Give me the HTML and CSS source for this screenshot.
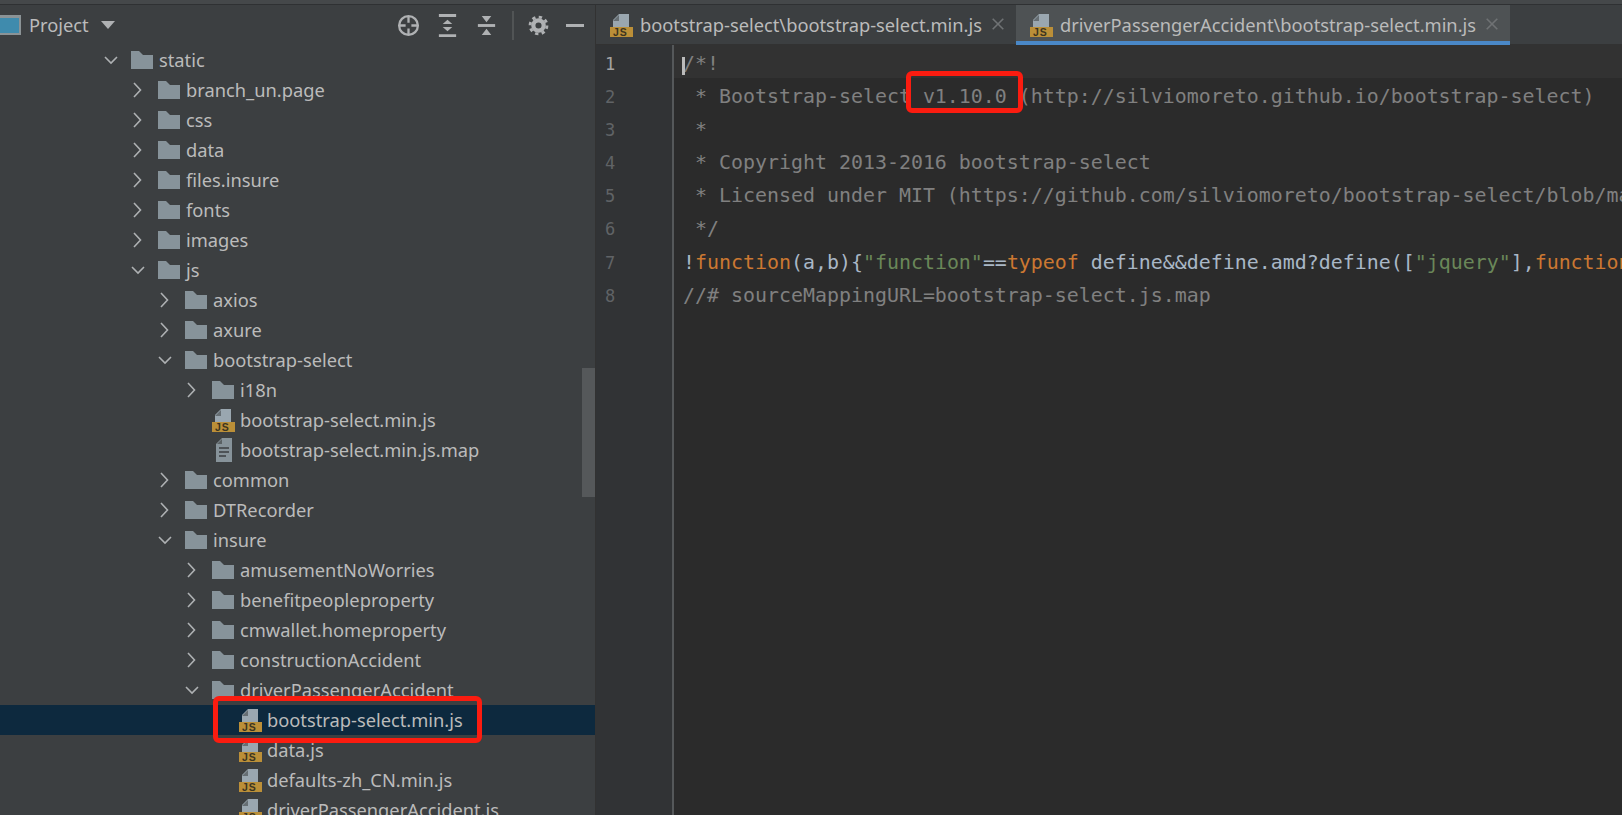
FILE: index.html
```html
<!DOCTYPE html>
<html lang="en">
<head>
  <meta charset="UTF-8" />
  <title>bootstrap-select.min.js</title>
  <link rel="stylesheet" href="styles.css">
</head>
<body>
  <svg class="defs" width="0" height="0">
    <symbol id="folder" viewBox="0 0 22 18">
      <path d="M0 0h8l4 4h10v14H0z" fill="#87939a"/>
    </symbol>
    <symbol id="open" viewBox="0 0 14 14">
      <path d="M1 4l6 6 6-6" fill="none" stroke="#aeb1b3" stroke-width="1.6"/>
    </symbol>
    <symbol id="closed" viewBox="0 0 14 16">
      <path d="M3 1l6.5 7L3 15" fill="none" stroke="#aeb1b3" stroke-width="1.6"/>
    </symbol>
    <symbol id="jsfile" viewBox="0 0 23 23">
      <path d="M9 0h10v13H3V6z" fill="#9aa7b0"/>
      <path d="M9 1v6H3z" fill="#3c3f41" opacity=".55"/>
      <rect x="0" y="13" width="23" height="10" fill="#bb8f38"/>
      <text x="3" y="21.8" class="js-label">JS</text>
    </symbol>
    <symbol id="mapfile" viewBox="0 0 16 24">
      <path d="M6 0h10v24H0V6z" fill="#87939a"/>
      <path d="M6 1v5H1z" fill="#3c3f41" opacity=".6"/>
      <path d="M3 10h10M3 14h10M3 18h7" stroke="#3c3f41" stroke-width="1.6"/>
    </symbol>
    <symbol id="close" viewBox="0 0 12 12">
      <path d="M.7.7l10.6 10.6M11.3.7L.7 11.3" stroke="#6f7274" stroke-width="1.6"/>
    </symbol>
  </svg>

  <div class="top-strip"></div>
  <div class="ide">
    <aside class="project">
      <div class="project-head">
        <span class="window-icon"></span>
        <span class="project-title">Project</span>
        <span class="drop-arrow"></span>
        <div class="tools">
          <svg class="tool" viewBox="0 0 24 24">
            <circle cx="12" cy="12" r="9.8" fill="none" stroke="#afb1b3" stroke-width="2.4"/>
            <path d="M12 3v6M12 15v6M3 12h6M15 12h6" stroke="#afb1b3" stroke-width="2.4"/>
          </svg>
          <svg class="tool" viewBox="0 0 24 24">
            <path d="M3 1.5h18M3 22.5h18" stroke="#afb1b3" stroke-width="3"/>
            <path d="M12 6l5 4.5H7zM12 18l-5-4.5h10z" fill="#afb1b3"/>
          </svg>
          <svg class="tool" viewBox="0 0 24 24">
            <path d="M3 12h18" stroke="#afb1b3" stroke-width="3"/>
            <path d="M7 2h10l-5 6.5zM7 22h10l-5-6.5z" fill="#afb1b3"/>
          </svg>
          <span class="tool-sep"></span>
          <svg class="tool" viewBox="0 0 24 24">
            <circle cx="12" cy="12" r="5.4" fill="none" stroke="#afb1b3" stroke-width="4.4"/>
            <circle cx="12" cy="12" r="8.8" fill="none" stroke="#afb1b3" stroke-width="3" stroke-dasharray="3.45 3.46"/>
          </svg>
          <span class="tool-minus"></span>
        </div>
      </div>

      <ul class="tree">
        <li class="row depth-0"><svg class="arrow"><use href="#open"/></svg><svg class="folder"><use href="#folder"/></svg>static</li>
        <li class="row depth-1"><svg class="arrow"><use href="#closed"/></svg><svg class="folder"><use href="#folder"/></svg>branch_un.page</li>
        <li class="row depth-1"><svg class="arrow"><use href="#closed"/></svg><svg class="folder"><use href="#folder"/></svg>css</li>
        <li class="row depth-1"><svg class="arrow"><use href="#closed"/></svg><svg class="folder"><use href="#folder"/></svg>data</li>
        <li class="row depth-1"><svg class="arrow"><use href="#closed"/></svg><svg class="folder"><use href="#folder"/></svg>files.insure</li>
        <li class="row depth-1"><svg class="arrow"><use href="#closed"/></svg><svg class="folder"><use href="#folder"/></svg>fonts</li>
        <li class="row depth-1"><svg class="arrow"><use href="#closed"/></svg><svg class="folder"><use href="#folder"/></svg>images</li>
        <li class="row depth-1"><svg class="arrow"><use href="#open"/></svg><svg class="folder"><use href="#folder"/></svg>js</li>
        <li class="row depth-2"><svg class="arrow"><use href="#closed"/></svg><svg class="folder"><use href="#folder"/></svg>axios</li>
        <li class="row depth-2"><svg class="arrow"><use href="#closed"/></svg><svg class="folder"><use href="#folder"/></svg>axure</li>
        <li class="row depth-2"><svg class="arrow"><use href="#open"/></svg><svg class="folder"><use href="#folder"/></svg>bootstrap-select</li>
        <li class="row depth-3"><svg class="arrow"><use href="#closed"/></svg><svg class="folder"><use href="#folder"/></svg>i18n</li>
        <li class="row depth-3 leaf"><svg class="file"><use href="#jsfile"/></svg>bootstrap-select.min.js</li>
        <li class="row depth-3 leaf"><svg class="file map"><use href="#mapfile"/></svg>bootstrap-select.min.js.map</li>
        <li class="row depth-2"><svg class="arrow"><use href="#closed"/></svg><svg class="folder"><use href="#folder"/></svg>common</li>
        <li class="row depth-2"><svg class="arrow"><use href="#closed"/></svg><svg class="folder"><use href="#folder"/></svg>DTRecorder</li>
        <li class="row depth-2"><svg class="arrow"><use href="#open"/></svg><svg class="folder"><use href="#folder"/></svg>insure</li>
        <li class="row depth-3"><svg class="arrow"><use href="#closed"/></svg><svg class="folder"><use href="#folder"/></svg>amusementNoWorries</li>
        <li class="row depth-3"><svg class="arrow"><use href="#closed"/></svg><svg class="folder"><use href="#folder"/></svg>benefitpeopleproperty</li>
        <li class="row depth-3"><svg class="arrow"><use href="#closed"/></svg><svg class="folder"><use href="#folder"/></svg>cmwallet.homeproperty</li>
        <li class="row depth-3"><svg class="arrow"><use href="#closed"/></svg><svg class="folder"><use href="#folder"/></svg>constructionAccident</li>
        <li class="row depth-3"><svg class="arrow"><use href="#open"/></svg><svg class="folder"><use href="#folder"/></svg>driverPassengerAccident</li>
        <li class="row depth-4 leaf selected"><svg class="file"><use href="#jsfile"/></svg>bootstrap-select.min.js</li>
        <li class="row depth-4 leaf"><svg class="file"><use href="#jsfile"/></svg>data.js</li>
        <li class="row depth-4 leaf"><svg class="file"><use href="#jsfile"/></svg>defaults-zh_CN.min.js</li>
        <li class="row depth-4 leaf"><svg class="file"><use href="#jsfile"/></svg>driverPassengerAccident.js</li>
      </ul>
      <div class="tree-scroll"></div>
    </aside>

    <main class="editor">
      <div class="tabs">
        <div class="tab">
          <svg class="file"><use href="#jsfile"/></svg>
          <span>bootstrap-select\bootstrap-select.min.js</span>
          <svg class="tab-close"><use href="#close"/></svg>
        </div>
        <div class="tab active">
          <svg class="file"><use href="#jsfile"/></svg>
          <span>driverPassengerAccident\bootstrap-select.min.js</span>
          <svg class="tab-close"><use href="#close"/></svg>
        </div>
      </div>

      <div class="code-area">
        <div class="gutter">
          <div class="num current">1</div>
          <div class="num">2</div>
          <div class="num">3</div>
          <div class="num">4</div>
          <div class="num">5</div>
          <div class="num">6</div>
          <div class="num">7</div>
          <div class="num">8</div>
        </div>
        <div class="code">
          <div class="line current"><span class="caret"></span><span class="cm">/*!</span></div>
          <div class="line cm"> * Bootstrap-select v1.10.0 (http://silviomoreto.github.io/bootstrap-select)</div>
          <div class="line cm"> *</div>
          <div class="line cm"> * Copyright 2013-2016 bootstrap-select</div>
          <div class="line cm"> * Licensed under MIT (https://github.com/silviomoreto/bootstrap-select/blob/master/LICENSE)</div>
          <div class="line cm"> */</div>
          <div class="line">!<span class="kw">function</span>(a,b){<span class="str">"function"</span>==<span class="kw">typeof</span> define&amp;&amp;define.amd?define([<span class="str">"jquery"</span>],<span class="kw">function</span>(a){return b(a)}):b(a.jQuery)}</div>
          <div class="line cm">//# sourceMappingURL=bootstrap-select.js.map</div>
        </div>
      </div>
    </main>
  </div>

  <!-- red marks drawn over the screenshot -->
  <div class="mark mark-version"></div>
  <div class="mark mark-file"></div>
</body>
</html>
```
FILE: styles.css
```css
* {
  box-sizing: border-box;
}

html, body {
  margin: 0;
  padding: 0;
  height: 100%;
  overflow: hidden;
}

body {
  position: relative;
  background: #3c3f41;
  color: #bbbbbb;
  font-family: "Noto Sans", "Open Sans", sans-serif;
  font-size: 18.3px;
}

.defs {
  position: absolute;
}

.js-label {
  font-family: "Liberation Sans", sans-serif;
  font-size: 10.5px;
  font-weight: bold;
  letter-spacing: 1px;
  fill: #3c3520;
}

.top-strip {
  height: 5px;
  background: #45484a;
  border-bottom: 1px solid #2f3133;
}

.ide {
  display: flex;
  height: 810px;
}

/* left panel */
.project {
  position: relative;
  width: 596px;
  flex: none;
  overflow: hidden;
  border-right: 1px solid #323232;
}

.project-head {
  display: flex;
  align-items: center;
  height: 40px;
}

.window-icon {
  width: 21px;
  height: 20px;
  margin-right: 8px;
  background: #3f8bad;
  border: 2px solid #8b9396;
  border-left: none;
  border-top-width: 3px;
}

.project-title {
  width: 72px;
  margin-bottom: 2px;
}

.drop-arrow {
  width: 0;
  height: 0;
  border-left: 7px solid transparent;
  border-right: 7px solid transparent;
  border-top: 8px solid #afb1b3;
}

.tools {
  display: flex;
  align-items: center;
  margin-left: 282px;
}

.tool {
  width: 23px;
  height: 23px;
  margin-right: 16px;
}

.tool-sep {
  width: 2px;
  height: 29px;
  margin: 0 13px 0 -2px;
  background: #515455;
}

.tool-minus {
  width: 18px;
  height: 3px;
  background: #afb1b3;
}

.tree {
  list-style: none;
  margin: 0;
  padding: 0;
}

/* text sits 1px above the icon centre */
.row {
  display: flex;
  align-items: center;
  height: 30px;
  padding-bottom: 2px;
  white-space: nowrap;
}

.depth-0 { padding-left: 104px; }
.depth-1 { padding-left: 131px; }
.depth-2 { padding-left: 158px; }
.depth-3 { padding-left: 185px; }
.depth-4 { padding-left: 212px; }

.depth-3.leaf { padding-left: 212px; }
.depth-4.leaf { padding-left: 239px; }

.row.selected {
  background: #0d293e;
}

.arrow {
  width: 14px;
  height: 16px;
  margin: 2px 13px 0 0;
  flex: none;
}

.folder {
  width: 22px;
  height: 18px;
  margin: 2px 6px 0 0;
  flex: none;
}

.file {
  width: 23px;
  height: 23px;
  margin: 2px 5px 0 0;
  flex: none;
}

.file.map {
  width: 16px;
  height: 24px;
  margin-left: 4px;
  margin-right: 8px;
}

.tree-scroll {
  position: absolute;
  top: 363px;
  right: 0;
  width: 13px;
  height: 129px;
  background: #55585a;
}

/* editor */
.editor {
  flex: 1;
  min-width: 0;
  overflow: hidden;
}

.tabs {
  display: flex;
  height: 40px;
  background: #3c3f41;
  border-bottom: 1px solid #323232;
}

.tab {
  display: flex;
  align-items: center;
  height: 40px;
  padding: 0 12px 2px 14px;
  white-space: nowrap;
}

.tab .file {
  margin-right: 7px;
}

.tab.active {
  background: #4e5254;
  box-shadow: inset 0 -4px 0 #4a88c7;
}

.tab-close {
  width: 12px;
  height: 12px;
  margin-left: 10px;
  flex: none;
}

.code-area {
  display: flex;
  height: 770px;
  background: #2b2b2b;
  font-family: "DejaVu Sans Mono", monospace;
  font-size: 19.93px;
}

.gutter {
  width: 78px;
  flex: none;
  padding-left: 9px;
  background: #313335;
  border-right: 2px solid #55585a;
  color: #606366;
  font-size: 17px;
}

.num {
  height: 33.1px;
  line-height: 38px;
}

.num.current {
  color: #a4a3a3;
}

.code {
  flex: 1;
  min-width: 0;
  overflow: hidden;
}

.line {
  position: relative;
  height: 33.1px;
  line-height: 37px;
  padding-left: 9px;
  white-space: pre;
  color: #a9b7c6;
}

.line.current {
  background: #323232;
}

.caret {
  position: absolute;
  left: 8px;
  top: 12px;
  width: 3px;
  height: 18px;
  background: #bbbbbb;
}

.cm { color: #808080; }
.kw { color: #cc7832; }
.str { color: #6a8759; }

/* annotation boxes */
.mark {
  position: absolute;
  border: 5px solid #fb1c10;
  border-radius: 6px;
}

.mark-version {
  left: 906px;
  top: 71px;
  width: 117px;
  height: 42px;
}

.mark-file {
  left: 213px;
  top: 696px;
  width: 269px;
  height: 47px;
}
```
